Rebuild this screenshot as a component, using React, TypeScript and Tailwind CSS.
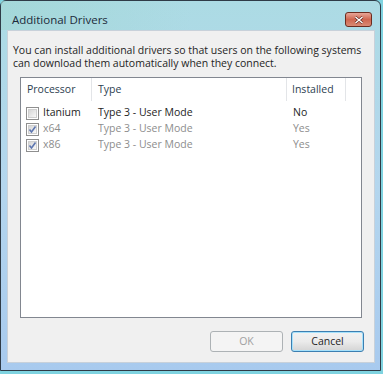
import React from "react";

const ROWS = [
  { name: "Itanium", type: "Type 3 - User Mode", installed: "No", checked: false, disabled: false },
  { name: "x64", type: "Type 3 - User Mode", installed: "Yes", checked: true, disabled: true },
  { name: "x86", type: "Type 3 - User Mode", installed: "Yes", checked: true, disabled: true },
];

function Check({ checked, disabled }: { checked: boolean; disabled: boolean }) {
  return (
    <div className="w-[13px] h-[13px] border border-[#8f8f8f] bg-white p-[1px] shrink-0">
      <div className="w-full h-full bg-gradient-to-br from-[#d6d6d6] to-[#f8f8f8] border border-[#cfcfcf] relative">
        {checked && (
          <svg viewBox="0 0 9 9" className="absolute -left-[1px] -top-[1px] w-[9px] h-[9px]">
            <path
              d="M1.5 4.5 L3.5 7 L7.5 1.5"
              fill="none"
              stroke={disabled ? "#5d76b0" : "#2a4e9a"}
              strokeWidth="1.6"
            />
          </svg>
        )}
      </div>
    </div>
  );
}

export default function App() {
  return (
    <div className="w-[383px] h-[374px] bg-[#7fd3e0] font-['Open_Sans','Segoe_UI',sans-serif] text-[10.5px] text-black">
      <div className="w-[381px] h-[371px] rounded-t-[6px] border border-[#2f3b47] bg-gradient-to-b from-[#acdbe4] via-[#b4d6ee] to-[#a8caee] flex flex-col">
        {/* title bar */}
        <div className="h-[29px] flex items-center justify-between pl-[11px] pr-[8px] bg-gradient-to-r from-[#9fd6d2]/60 via-transparent to-transparent">
          <span className="text-[11.5px] text-[#1c2a3a] pt-[9px]">Additional Drivers</span>
          <div className="w-[27px] h-[15px] mt-[8px] rounded-[3px] border border-[#6b2c20] bg-gradient-to-b from-[#e7a698] via-[#cf6650] to-[#d98a74] flex items-center justify-center">
            <svg viewBox="0 0 10 8" className="w-[10px] h-[8px]">
              <path d="M1.5 1 L8.5 7 M8.5 1 L1.5 7" stroke="#5a1f16" strokeWidth="2.6" />
              <path d="M1.5 1 L8.5 7 M8.5 1 L1.5 7" stroke="#ffffff" strokeWidth="1.5" />
            </svg>
          </div>
        </div>

        {/* client area */}
        <div className="flex-1 ml-[6px] mr-[5px] mb-[7px] bg-[#f0f0f0] border border-[#8da2b9]/40 flex flex-col pl-[11px] pr-[10px] pt-[13px]">
          <p className="leading-[13px] text-[#1e1e1e] -ml-[6px] -mr-[4px]">
            You can install additional drivers so that users on the following systems can download them automatically when they connect.
          </p>

          <div className="mt-[7px] ml-[1px] w-[342px] h-[241px] border border-[#828790] bg-white flex flex-col">
            <div className="h-[23px] flex items-stretch text-[#2c3e50]">
              <div className="w-[71px] pl-[6px] flex items-center border-r border-[#e3e5e8]">Processor</div>
              <div className="w-[195px] pl-[6px] flex items-center border-r border-[#e3e5e8]">Type</div>
              <div className="w-[59px] pl-[5px] flex items-center border-r border-[#e3e5e8]">Installed</div>
              <div className="flex-1" />
            </div>
            <div className="pt-[4px] flex flex-col">
              {ROWS.map((r) => (
                <div
                  key={r.name}
                  className={`h-[16px] flex items-center ${r.disabled ? "text-[#8d8d8d]" : "text-[#1e1e1e]"}`}
                >
                  <div className="w-[71px] pl-[5px] flex items-center gap-[4px]">
                    <Check checked={r.checked} disabled={r.disabled} />
                    <span>{r.name}</span>
                  </div>
                  <div className="w-[195px] pl-[6px]">{r.type}</div>
                  <div className="pl-[6px]">{r.installed}</div>
                </div>
              ))}
            </div>
          </div>

          <div className="mt-auto mb-[10px] flex justify-end gap-[8px]">
            <button className="w-[73px] h-[21px] rounded-[3px] border border-[#adb2b5] bg-[#f4f4f4] text-[#a0a0a0]">
              OK
            </button>
            <button className="w-[73px] h-[21px] rounded-[3px] border border-[#3c7fb1] shadow-[inset_0_0_0_1px_#a6e1fb] bg-gradient-to-b from-[#f2f2f2] via-[#ebebeb] to-[#d4d4d4] text-[#1e1e1e]">
              Cancel
            </button>
          </div>
        </div>
      </div>
    </div>
  );
}
